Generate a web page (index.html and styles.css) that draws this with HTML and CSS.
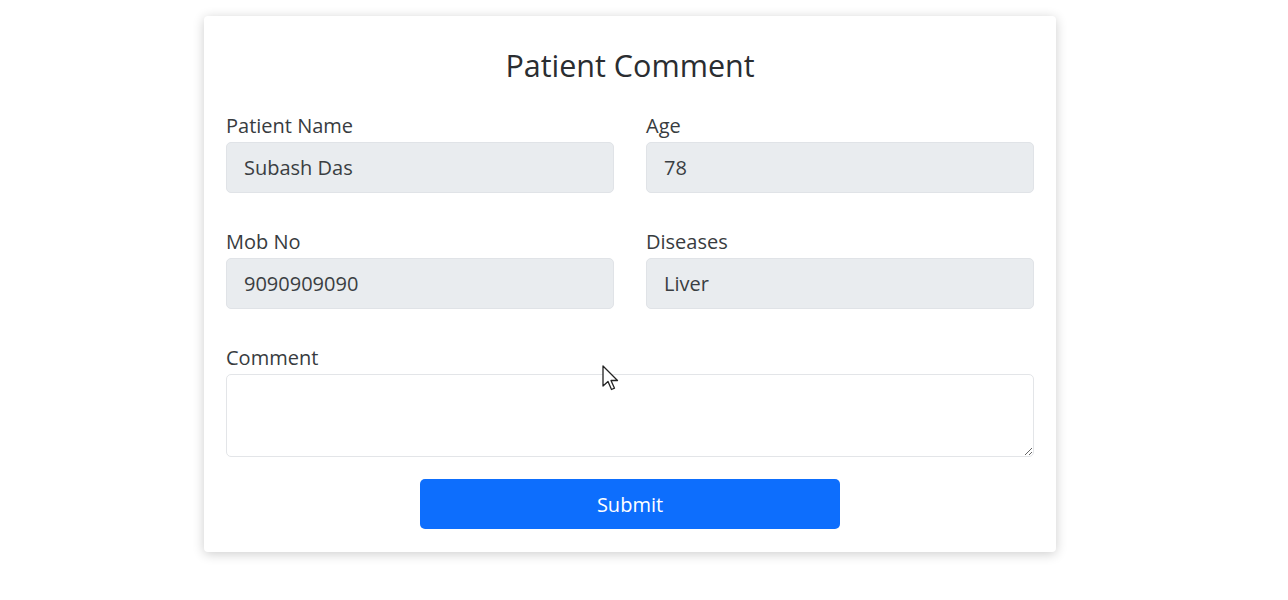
FILE: index.html
```html
<!DOCTYPE html>
<html>
<head>
<meta charset="utf-8">
<link rel="stylesheet" href="styles.css">
</head>
<body>
<div class="card">
  <h2 class="title">Patient Comment</h2>
  <div class="grid">
    <div class="field">
      <label class="label">Patient Name</label>
      <input class="input" type="text" value="Subash Das" readonly>
    </div>
    <div class="field">
      <label class="label">Age</label>
      <input class="input" type="text" value="78" readonly>
    </div>
    <div class="field">
      <label class="label">Mob No</label>
      <input class="input" type="text" value="9090909090" readonly>
    </div>
    <div class="field">
      <label class="label">Diseases</label>
      <input class="input" type="text" value="Liver" readonly>
    </div>
    <div class="field full">
      <label class="label">Comment</label>
      <textarea class="textarea"></textarea>
    </div>
  </div>
  <div class="actions">
    <button class="btn">Submit</button>
  </div>
</div>
<svg class="cursor" width="20" height="28" viewBox="0 0 20 28">
  <path d="M1 1 L1 21 L6 16.5 L9.5 24.5 L12.5 23.2 L9 15.5 L15.5 15.5 Z" fill="#fff" stroke="#222" stroke-width="1.3" stroke-linejoin="round"/>
</svg>
</body>
</html>
```
FILE: styles.css
```css
* { box-sizing: border-box; }
body {
  margin: 0;
  background: #fff;
  font-family: "Open Sans", "Noto Sans", sans-serif;
  color: #2b2f33;
  position: relative;
  height: 600px;
  overflow: hidden;
}
.card {
  width: 852px;
  margin: 16px 0 0 204px;
  background: #fff;
  border-radius: 4px;
  box-shadow: 0 2px 12px rgba(0,0,0,0.2);
  padding: 31px 22px 23px;
}
.title {
  margin: 0 0 31px;
  text-align: center;
  font-weight: 400;
  font-size: 30.5px;
  line-height: 36px;
  color: #2a2d31;
}
.grid {
  display: grid;
  grid-template-columns: 1fr 1fr;
  column-gap: 32px;
  row-gap: 37px;
}
.full { grid-column: 1 / span 2; }
.field { display: flex; flex-direction: column; }
.label {
  font-size: 20px;
  line-height: 24px;
  margin-bottom: 4px;
  color: #383c40;
}
.input {
  height: 51px;
  border: 1px solid #e0e3e7;
  border-radius: 5px;
  background: #e9ecef;
  padding: 0 17px;
  font-family: inherit;
  font-size: 20px;
  color: #3a3e42;
  outline: none;
}
.textarea {
  height: 83px;
  border: 1px solid #e3e5e8;
  border-radius: 5px;
  background: #fff;
  font-family: inherit;
  font-size: 20px;
  outline: none;
  resize: vertical;
}
.actions {
  display: flex;
  justify-content: center;
  margin-top: 22px;
}
.btn {
  width: 420px;
  height: 50px;
  background: #0d6efd;
  color: #fff;
  border: none;
  border-radius: 5px;
  font-family: inherit;
  font-size: 20px;
}
.cursor {
  position: absolute;
  left: 602px;
  top: 365px;
}
```
